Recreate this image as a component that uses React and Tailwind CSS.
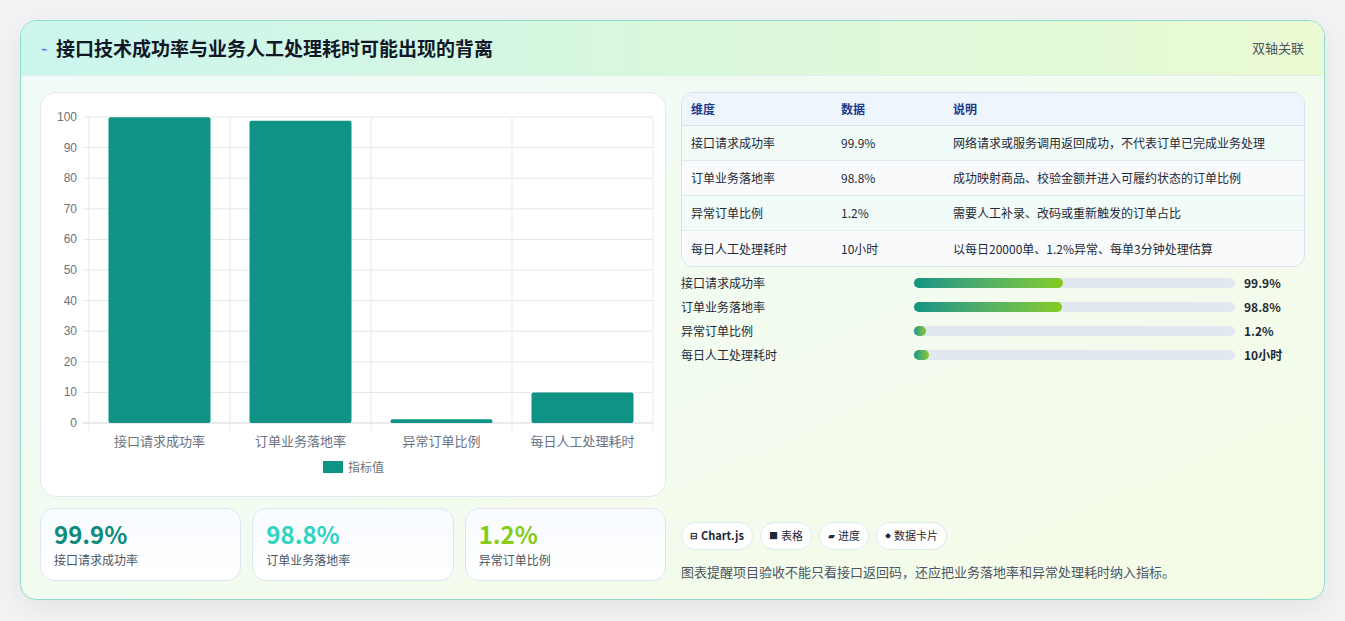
export default function App() {
  const font = { fontFamily: '"Noto Sans CJK SC", "Noto Sans", sans-serif' };
  const cats = ["接口请求成功率", "订单业务落地率", "异常订单比例", "每日人工处理耗时"];
  const vals = [99.9, 98.8, 1.2, 10];
  const x0 = 48, x1 = 612, y0 = 24, y1 = 330;
  const cw = (x1 - x0) / 4;
  const ys = (v) => y1 - (v / 100) * (y1 - y0);
  const rows = [
    ["接口请求成功率", "99.9%", "网络请求或服务调用返回成功，不代表订单已完成业务处理"],
    ["订单业务落地率", "98.8%", "成功映射商品、校验金额并进入可履约状态的订单比例"],
    ["异常订单比例", "1.2%", "需要人工补录、改码或重新触发的订单占比"],
    ["每日人工处理耗时", "10小时", "以每日20000单、1.2%异常、每单3分钟处理估算"],
  ];
  const bars = [["接口请求成功率", 149, "99.9%"], ["订单业务落地率", 148, "98.8%"], ["异常订单比例", 12, "1.2%"], ["每日人工处理耗时", 15, "10小时"]];
  return (
    <div className="min-h-[621px] bg-[#f1f2f3] pt-[20px] px-[20px]" style={font}>
      <div className="w-[1305px] h-[580px] rounded-[16px] border border-[#8fdcc9] overflow-hidden bg-gradient-to-br from-[#f0fbfa] to-[#f4fce6] shadow-[0_8px_24px_rgba(0,0,0,0.06)] flex flex-col">
        <div className="h-[55px] shrink-0 flex items-center justify-between px-[20px] bg-gradient-to-r from-[#cbf5ee] via-[#d9f8dd] to-[#eafad2] border-b border-[#dff0ea]">
          <div className="flex items-center gap-[8px]">
            <span className="text-[11px] text-[#3b6fd8]">⌁</span>
            <span className="text-[19px] font-bold text-[#111827]">接口技术成功率与业务人工处理耗时可能出现的背离</span>
          </div>
          <span className="text-[13px] text-[#4b5563]">双轴关联</span>
        </div>
        <div className="flex-1 flex gap-[15px] px-[19px] pt-[16px] pb-[19px]">
          <div className="w-[626px] flex flex-col gap-[11px]">
            <div className="h-[405px] bg-white rounded-[16px] border border-[#e2e8f0]">
              <svg width="626" height="400">
                {[0,10,20,30,40,50,60,70,80,90,100].map((v) => (
                  <g key={v}>
                    <line x1={x0 - 6} x2={x1} y1={ys(v)} y2={ys(v)} stroke={v === 0 ? "#cfd5df" : "#e5e7eb"} />
                    <text x={x0 - 12} y={ys(v) + 4} textAnchor="end" fontSize="12" fill="#6b7280" fontFamily="Liberation Sans, sans-serif">{v}</text>
                  </g>
                ))}
                {[0,1,2,3,4].map((i) => (
                  <line key={i} x1={x0 + i * cw} x2={x0 + i * cw} y1={y0} y2={y1 + 8} stroke="#e5e7eb" />
                ))}
                {vals.map((v, i) => (
                  <g key={i}>
                    <rect x={x0 + i * cw + 19.5} y={ys(v)} width="102" height={y1 - ys(v)} rx="2" fill="#0e9384" />
                    <text x={x0 + i * cw + cw / 2} y={y1 + 23} textAnchor="middle" fontSize="13" fill="#6b7280">{cats[i]}</text>
                  </g>
                ))}
                <rect x="282" y="368" width="20" height="12" fill="#0e9384" />
                <text x="307" y="379" fontSize="12" fill="#6b7280">指标值</text>
              </svg>
            </div>
            <div className="grid grid-cols-3 gap-[11px]">
              {[["99.9%", "text-[#0e8a7e]", "接口请求成功率"], ["98.8%", "text-[#2dd4bf]", "订单业务落地率"], ["1.2%", "text-[#84cc16]", "异常订单比例"]].map(([n, c, l]) => (
                <div key={l} className="h-[73px] rounded-[14px] border border-[#dbe7f0] bg-gradient-to-b from-[#f8fbff] to-white px-[13px] pt-[10px]">
                  <div className={`text-[24px] font-bold leading-[30px] ${c}`}>{n}</div>
                  <div className="text-[12px] text-[#4b5563] mt-[2px]">{l}</div>
                </div>
              ))}
            </div>
          </div>
          <div className="flex-1 flex flex-col justify-between">
            <div>
              <div className="rounded-[12px] border border-[#d6e2ee] overflow-hidden text-[12px]">
                <div className="h-[33px] flex items-center bg-[#eef5fd] border-b border-[#d6e2ee] font-bold text-[#1e3a8a]">
                  <div className="w-[150px] pl-[9px]">维度</div><div className="w-[112px] pl-[9px]">数据</div><div className="pl-[9px]">说明</div>
                </div>
                {rows.map((r, i) => (
                  <div key={i} className={`h-[35px] flex items-center text-[#1f2937] ${i < 3 ? "border-b border-[#e2e8f0]" : ""} ${i % 2 ? "bg-[#f8fafc]" : "bg-[#f1fbf7]"}`}>
                    <div className="w-[150px] pl-[9px]">{r[0]}</div><div className="w-[112px] pl-[9px]">{r[1]}</div><div className="pl-[9px]">{r[2]}</div>
                  </div>
                ))}
              </div>
              <div className="mt-[10px] flex flex-col gap-[12px]">
                {bars.map(([l, w, v]) => (
                  <div key={l} className="h-[12px] flex items-center text-[12px] text-[#1f2937]">
                    <div className="w-[233px]">{l}</div>
                    <div className="w-[321px] h-[10px] rounded-full bg-[#e2e8f0]">
                      <div className="h-[10px] rounded-full bg-gradient-to-r from-[#0e9384] to-[#84cc16]" style={{ width: w }} />
                    </div>
                    <div className="pl-[9px] font-bold">{v}</div>
                  </div>
                ))}
              </div>
            </div>
            <div>
              <div className="flex gap-[7px]">
                {["⊟ Chart.js", "■ 表格", "▰ 进度", "◆ 数据卡片"].map((t, i) => (
                  <div key={t} className={`h-[28px] px-[8px] flex items-center rounded-full border border-[#e2e8f0] bg-white text-[11px] text-[#1f2937] ${i === 0 ? "font-bold" : ""}`}>
                    <span className={i === 3 ? "text-[6px] mr-[3px]" : "mr-[3px] text-[9px]"}>{t.split(" ")[0]}</span>{t.split(" ")[1]}
                  </div>
                ))}
              </div>
              <div className="mt-[12px] text-[13px] text-[#4b5563]">图表提醒项目验收不能只看接口返回码，还应把业务落地率和异常处理耗时纳入指标。</div>
            </div>
          </div>
        </div>
      </div>
    </div>
  );
}
